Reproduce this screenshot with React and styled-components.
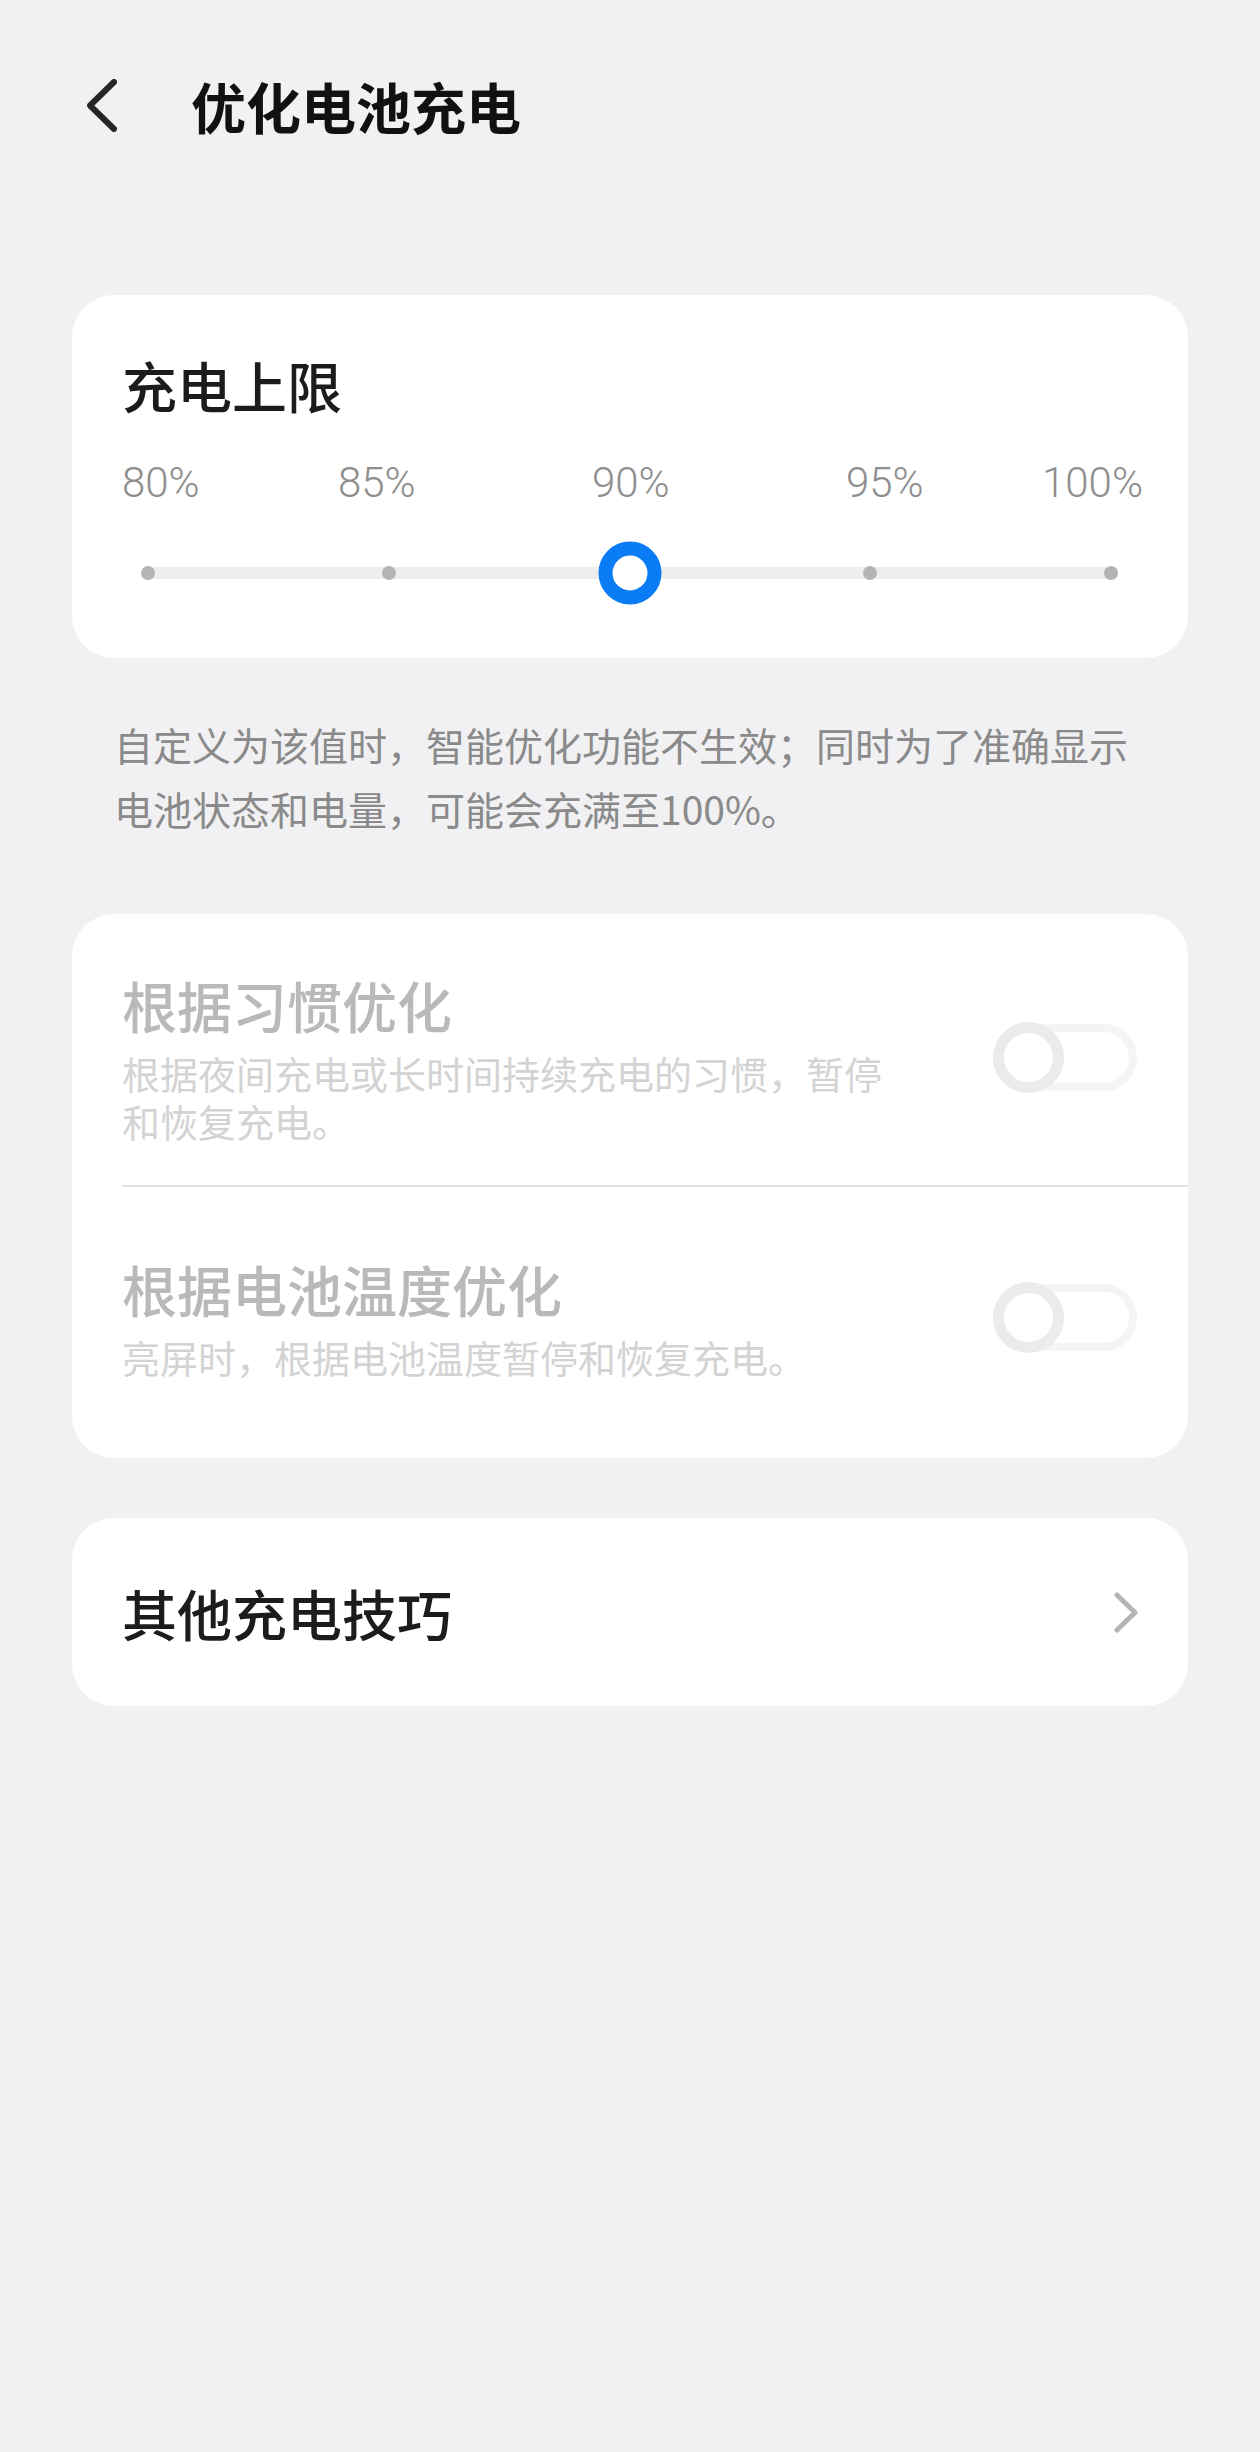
import React from "react";
import styled, { createGlobalStyle } from "styled-components";

const Global = createGlobalStyle`
  html, body { margin: 0; padding: 0; background: #f1f1f3; }
  body { font-family: "Noto Sans CJK SC", "Noto Sans", sans-serif; }
  #root { min-height: 2452px; background: #f1f1f3; }
`;

const Page = styled.div`
  width: 1260px;
  min-height: 2452px;
  background: #f1f1f3;
  display: flex;
  flex-direction: column;
`;

const Header = styled.header`
  height: 210px;
  display: flex;
  align-items: center;
  padding-left: 87px;
  gap: 74px;
`;

const BackBtn = styled.button`
  border: none;
  background: none;
  padding: 0;
  width: 30px;
  height: 53px;
  display: flex;
  color: #262626;
`;

const Title = styled.h1`
  margin: 0;
  font-size: 55px;
  line-height: 70px;
  font-weight: 700;
  color: #111;
`;

const Content = styled.main`
  margin-top: 85px;
  padding: 0 72px;
  display: flex;
  flex-direction: column;
`;

const Card = styled.section`
  background: #fff;
  border-radius: 42px;
  display: flex;
  flex-direction: column;
  padding: ${(p) => p.$pad || "0"};
  margin-top: ${(p) => p.$mt || 0}px;
`;

const CardTitle = styled.div`
  font-size: 55px;
  line-height: 70px;
  font-weight: 500;
  color: ${(p) => (p.$disabled ? "#b9b9b9" : "#1c1c1c")};
`;

const Labels = styled.div`
  margin-top: 36px;
  display: grid;
  grid-template-columns: 216px 254px 254px 196px 98px;
  font-family: Roboto, "Noto Sans", sans-serif;
  font-weight: 300;
  font-size: 42px;
  line-height: 56px;
  color: #8e8e8e;
`;

const Label = styled.span`
  text-align: ${(p) => (p.$right ? "right" : "left")};
`;

const SliderArea = styled.div`
  margin-top: 30px;
  height: 63px;
  padding: 0 20px 0 19px;
  display: flex;
  align-items: center;
`;

const Track = styled.div`
  position: relative;
  flex: 1;
  height: 12px;
  border-radius: 6px;
  background: #eeeeee;
  display: flex;
  align-items: center;
  justify-content: space-between;
`;

const Dot = styled.span`
  width: 14px;
  height: 14px;
  border-radius: 50%;
  background: #b4b4b4;
`;

const Thumb = styled.span`
  position: absolute;
  left: 50%;
  top: 50%;
  width: 63px;
  height: 63px;
  box-sizing: border-box;
  transform: translate(-50%, -50%);
  border-radius: 50%;
  border: 14px solid #0a7cf6;
  background: #fff;
`;

const Note = styled.p`
  margin: 54px 0 0;
  padding: 0 44px 0 42px;
  font-size: 39px;
  line-height: 64px;
  color: #8a8a8a;
`;

const Row = styled.div`
  display: flex;
  align-items: center;
  justify-content: space-between;
  padding: ${(p) => p.$pt}px 51px ${(p) => p.$pb}px 50px;
`;

const Divider = styled.div`
  margin-left: 50px;
  height: 2px;
  background: #e2e2e2;
`;

const TextCol = styled.div`
  display: flex;
  flex-direction: column;
`;

const Sub = styled.div`
  margin-top: 10px;
  max-width: 780px;
  font-size: 38px;
  line-height: 48px;
  color: #d3d3d3;
`;

const Switch = styled.div`
  position: relative;
  width: 144px;
  height: 71px;
  flex: none;
  display: flex;
  align-items: center;

  &::before {
    content: "";
    position: absolute;
    left: 20px;
    right: 0;
    top: 2px;
    bottom: 2px;
    border-radius: 34px;
    border: 8px solid #f4f4f4;
    background: #fff;
  }
`;

const Knob = styled.span`
  position: relative;
  width: 71px;
  height: 71px;
  box-sizing: border-box;
  border-radius: 50%;
  border: 11px solid #ebebeb;
  background: #fff;
`;

const LinkRow = styled.div`
  height: 188px;
  padding: 0 50px;
  display: flex;
  align-items: center;
  justify-content: space-between;
`;

const Chevron = ({ dir = "left", color, w, h, sw }) => (
  <svg width={w} height={h} viewBox={`0 0 ${w} ${h}`} fill="none">
    <path
      d={
        dir === "left"
          ? `M${w - 3} 3 L3 ${h / 2} L${w - 3} ${h - 3}`
          : `M3 3 L${w - 3} ${h / 2} L3 ${h - 3}`
      }
      stroke={color}
      strokeWidth={sw}
      strokeLinecap="round"
      strokeLinejoin="round"
    />
  </svg>
);

const labels = ["80%", "85%", "90%", "95%", "100%"];

export default function App() {
  return (
    <Page>
      <Global />
      <Header>
        <BackBtn aria-label="返回">
          <Chevron dir="left" color="#262626" w={30} h={53} sw={6} />
        </BackBtn>
        <Title>优化电池充电</Title>
      </Header>
      <Content>
        <Card $pad="54px 50px 54px 50px">
          <CardTitle>充电上限</CardTitle>
          <Labels>
            {labels.map((l, i) => (
              <Label key={l} $right={i === labels.length - 1}>
                {l}
              </Label>
            ))}
          </Labels>
          <SliderArea>
            <Track>
              <Dot />
              <Dot />
              <Dot />
              <Dot />
              <Dot />
              <Thumb />
            </Track>
          </SliderArea>
        </Card>
        <Note>
          自定义为该值时，智能优化功能不生效；同时为了准确显示电池状态和电量，可能会充满至100%。
        </Note>
        <Card $mt={74} $pad="55px 0 77px 0">
          <Row $pt={0} $pb={40}>
            <TextCol>
              <CardTitle $disabled>根据习惯优化</CardTitle>
              <Sub>根据夜间充电或长时间持续充电的习惯，暂停和恢复充电。</Sub>
            </TextCol>
            <Switch>
              <Knob />
            </Switch>
          </Row>
          <Divider />
          <Row $pt={66} $pb={0}>
            <TextCol>
              <CardTitle $disabled>根据电池温度优化</CardTitle>
              <Sub>亮屏时，根据电池温度暂停和恢复充电。</Sub>
            </TextCol>
            <Switch>
              <Knob />
            </Switch>
          </Row>
        </Card>
        <Card $mt={60}>
          <LinkRow>
            <CardTitle>其他充电技巧</CardTitle>
            <Chevron dir="right" color="#b5b5b5" w={24} h={41} sw={5} />
          </LinkRow>
        </Card>
      </Content>
    </Page>
  );
}
